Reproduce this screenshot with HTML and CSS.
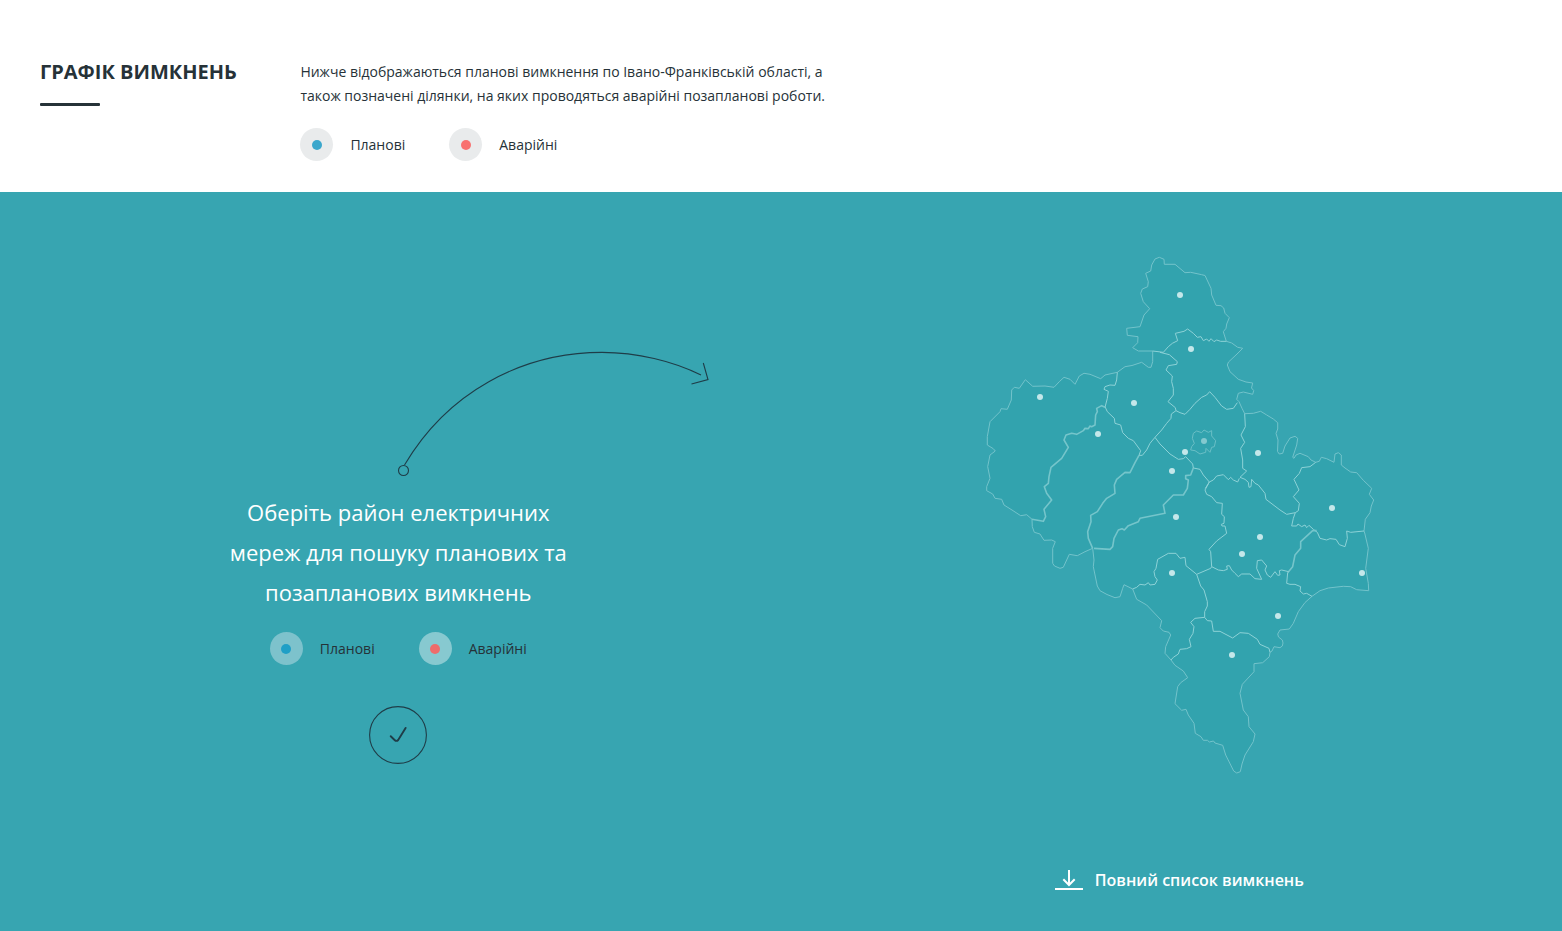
FILE: index.html
```html
<!DOCTYPE html>
<html lang="uk">
<head>
<meta charset="utf-8">
<title>Графік вимкнень</title>
<link rel="stylesheet" href="styles.css">
</head>
<body>
<header class="intro">
  <div class="intro-title"><h1>ГРАФІК ВИМКНЕНЬ</h1></div>
  <div class="intro-body">
    <p>Нижче відображаються планові вимкнення по Івано-Франківській області, а<br>також позначені ділянки, на яких проводяться аварійні позапланові роботи.</p>
    <ul class="legend">
      <li><i class="mark planned"></i><span>Планові</span></li>
      <li><i class="mark urgent"></i><span>Аварійні</span></li>
    </ul>
  </div>
</header>
<main class="board">
  <section class="guide">
    <svg class="arc" width="320" height="136" viewBox="392 346 320 136">
      <circle cx="403.5" cy="470.5" r="5"/>
      <path d="M404.5 465C447 393 521 352.4 602 352.4C637 352.4 673 361 701 375"/>
      <path d="M703.3 363L708 379.5L691.5 384"/>
    </svg>
    <p class="guide-text">Оберіть район електричних<br>мереж для пошуку планових та<br>позапланових вимкнень</p>
    <ul class="legend on-color">
      <li><i class="mark planned"></i><span>Планові</span></li>
      <li><i class="mark urgent"></i><span>Аварійні</span></li>
    </ul>
    <button class="confirm" aria-label="Підтвердити">
      <svg width="58" height="58" viewBox="0 0 58 58"><circle cx="29" cy="29" r="28.4"/><path d="M21.7 30.2L25.6 34Q27.5 35.8 29.2 34L36.6 21.9"/></svg>
    </button>
  </section>
  <section class="region">
    <svg class="map" width="400" height="530" viewBox="980 250 400 530">
      <path class="outline" d="M1155 259L1159.3 257.3 1164 259.3 1164.3 264.3 1175 264.3 1185 272.7 1190.7 272.3 1201.7 274.7 1205 275.5 1211 288.3 1211.7 295 1216 305.3 1221 305.7 1223.7 308 1225 313.3 1229.3 317.7 1226.7 324 1226 328.3 1223.3 331.7 1226.3 341.3 1231.7 343 1237.7 347.3 1242.7 348.3 1237 354 1228.5 362 1227.3 365 1230 371.7 1238.3 379.3 1246 382 1252.7 383 1251.5 388 1253.7 390.5 1252.7 394.3 1243.3 392 1238.3 393.3 1236.7 399.3 1239 401.7 1242 408.3 1244.7 413.7 1253.3 413.3 1260.7 411.3 1266.7 415 1273.3 419 1277.7 422.7 1277.7 429 1276 433.3 1278 440 1277.5 451.5 1279.3 454 1282.7 453.3 1285 446 1290 438 1295 436.3 1297.7 438.3 1296.7 445 1292.7 457.3 1294 458.3 1296 455 1300 453.3 1308.3 456.7 1311 460 1315.7 462.3 1319.3 461.3 1321.3 457.3 1326.7 458.7 1334 462.3 1335 454 1338.3 452.7 1341.3 455 1341.3 465 1345 468 1350.7 472 1356.7 472.7 1363.3 480.3 1371.7 488.3 1369.3 494.3 1373.7 500 1371.3 506 1370 512.7 1365.3 519.3 1364 531 1364.7 533 1368.3 548.3 1365.7 568.3 1368.3 583.3 1368.7 590.7 1356.7 589.7 1350.7 586.7 1343.3 586.3 1328.3 588 1320 590.7 1312 596.3 1305 602.5 1298.3 611.7 1293.3 623.3 1289.3 629 1280 630 1277.7 634 1278.5 637 1282.3 640 1283 643 1282.3 646 1280 647.7 1274 646.7 1272 651 1270 652.3 1269.3 656.7 1262.7 662.7 1254 663.7 1254 671.7 1242.3 684.3 1240 693.3 1243.3 710 1248.3 716.7 1249 726.7 1255 734 1253.3 741.7 1245 755 1242 764 1240.3 771.7 1236.7 773 1233.7 771 1225.7 755 1222.7 745.3 1215 743 1213.5 741 1209.3 742 1207.5 740.3 1203.3 740.3 1201 736.7 1195.3 733.3 1194 723.3 1188.3 715 1186 709.3 1181.7 710.3 1175 703.7 1177.7 686.7 1180.7 682.7 1187.7 677.7 1183.3 671 1175 665.3 1171 660 1165 653.3 1165.7 646.7 1170.7 635 1169 632.3 1163.3 631 1160 627.7 1161.7 620.7 1146.7 605 1136.7 599.3 1135 595 1132.7 589 1124 584.7 1122.7 588.3 1120 596.7 1115 597.7 1107 594.5 1100 590.7 1097.3 586 1093.3 566.7 1094 560 1092.7 548.3 1085 551.7 1077.3 555.7 1069.3 554.3 1063.3 567.3 1060 568.3 1054.5 566 1052.7 563.3 1052.7 548.3 1055.3 541.7 1051.7 540 1044 540.3 1040 534 1034.3 532.3 1032.3 526.7 1032 519.3 1026.7 514.7 1020.7 515.7 1012 510 1004 505 1001.7 499.3 995 498.3 992.7 494 986.7 490.7 986.7 486.7 990 478.3 987.7 466.7 990 455 995.3 451 993.3 448.7 987.3 445 987.3 436.7 990 421.7 1000 411.7 1001 408.7 1007.3 409.3 1011.3 400 1011.7 390 1014.3 387.3 1019.3 388.3 1025.3 379.7 1032.7 386.3 1045 386 1054 387.3 1059.3 381.7 1064 377.3 1070 379.3 1075 384.3 1079.3 376 1084 373.3 1090 374.3 1100.7 378.7 1105 375 1117.3 372.3 1125 366.7 1132 365.5 1141.7 362.3 1148.3 367.3 1151 367.3 1152.7 361.7 1152.7 351 1138.3 351 1132.7 347.7 1137.7 342.7 1138 336.7 1127.3 335.3 1126.7 328.3 1140 326.7 1144 315 1149.7 308.7 1143.3 301.7 1140.7 293.3 1142.3 289 1147.7 286.7 1148.3 281.7 1145.7 273.3 1150.7 271 1151.7 265Z"/>
      <g class="borders">
        <g transform="translate(1110 250) scale(.33333)">
          <path d="M128 303L160 307 175 290 187 280 203 272 196 250 222 244 233 237 250 250 262 262 273 260 280 272 290 267 297 274 303 266 312 275 320 270 332 274 349 274"/>
          <path d="M150 307L178 314 202 335 200 343 175 347 168 360 187 378 185 395 190 415 190 435 174 455 196 473 198 482"/>
        </g>
        <g transform="translate(980 350) scale(.33333)">
          <path d="M412 67L410 90 405 106 390 105 375 110 372 118 385 124 382 145 375 172"/>
          <path class="twin" d="M375 172L365 167 350 175 352 185 347 195 345 225 335 230 330 228 325 236 315 235 310 242 290 253 275 250 258 255 252 270 265 292 245 325 213 352 207 380 205 400 193 410 200 430 215 450 192 478 197 500 190 514 156 508"/>
        </g>
        <g transform="translate(1100 380) scale(.33333)">
          <path d="M228 92L214 102 213 115 200 130 185 150 165 172 150 190 140 210 127 226 117 226 122 212 100 182 85 175 68 158 62 135 45 130 43 115 22 95 15 80"/>
          <path d="M228 92L240 98 255 103 270 88 285 70 305 52 320 45 329 35 345 52 365 78 380 88 400 85 412 68"/>
          <path d="M418 295L413 306 400 300 392 292 385 299 370 284 350 288 340 300 328 306 316 325"/>
          <path d="M165 172L180 192 210 222 235 238 250 236 257 230 278 252 280 264 300 268 310 285 328 306"/>
          <path class="twin" d="M280 264L272 285 257 287 257 296 265 300 262 325 250 345 220 345 190 375 195 400 120 415 115 425 85 437 73 450 66 446 55 450 42 475 38 500 30 508 -18 505"/>
          <path class="twin" d="M117 226L105 248 90 278 75 277 50 298 43 315 45 340 20 355 8 370 -8 395 -28 406 -27 425 -37 455 -35 475 -22 505"/>
          <path class="city" d="M280 160L290 153 305 158 312 150 325 157 335 152 335 168 347 182 343 200 335 202 330 217 318 205 317 217 300 222 285 212 272 210 275 200 283 190 277 175Z"/>
        </g>
        <g transform="translate(1230 400) scale(.33333)">
          <path d="M44 41L46 80 33 105 44 127 32 145 38 180 38 205 50 213 30 232"/>
          <path d="M257 187L240 200 215 203 208 220 192 238 207 270 190 290 208 310 205 332 196 338 190 355 185 378 200 378 204 372 215 380 225 375 230 383 237 376 250 388 262 397 270 415 290 420 300 416 318 418 328 434 345 440 352 415 350 393 362 397 402 393"/>
          <path d="M30 232L45 238 55 247 57 262 63 260 65 238 75 250 85 255 105 280 108 298 150 330 170 343 196 338"/>
        </g>
        <g transform="translate(1240 500) scale(.33333)">
          <path class="twin" d="M230 92L218 92 182 125 182 145 165 165 158 200 143 218"/>
          <path d="M146 215L125 210 118 212 120 225 113 226 105 215 92 232 82 225 75 210 80 198 65 180 52 182 50 205 65 238 45 236 30 222 5 222"/>
          <path d="M143 218L140 250 150 253 165 253 182 260 180 273 190 282 200 280 216 289"/>
        </g>
        <g transform="translate(1140 480) scale(.33333)">
          <path d="M305 282L295 290 285 280 275 270 268 257 260 258 262 268 250 272 235 270 215 260"/>
          <path d="M208 6L195 30 200 43 215 50 230 68 247 70 245 103 253 110 252 130 244 133 246 138 255 138 260 160 230 183 207 208 212 215 215 260 212 265 170 283 138 257 135 232 120 235 108 220 85 220 53 238 48 265 42 275 45 290 52 300 45 313 30 315 25 308 15 315 0 313 -10 322 -22 327"/>
          <path d="M170 283L182 318 192 330 202 365 202 378 194 395 194 412"/>
        </g>
        <g transform="translate(1120 590) scale(.33333)">
          <path d="M254 82L262 92 275 93 280 124 300 124 338 144 360 128 385 130 412 148 420 163 447 175 450 187"/>
          <path d="M254 82L225 85 212 97 222 110 219 130 208 148 213 170 200 176 180 178 175 192 160 202 153 210"/>
        </g>
      </g>
      <g class="points">
        <circle cx="1180" cy="295" r="3"/><circle cx="1191" cy="349" r="3"/><circle cx="1040" cy="397" r="3"/>
        <circle cx="1134" cy="403" r="3"/><circle cx="1098" cy="434" r="3"/><circle class="dim" cx="1204" cy="441" r="3"/>
        <circle cx="1185" cy="452" r="3"/><circle cx="1258" cy="453" r="3"/><circle cx="1172" cy="471" r="3"/>
        <circle cx="1332" cy="508" r="3"/><circle cx="1176" cy="517" r="3"/><circle cx="1260" cy="537" r="3"/>
        <circle cx="1242" cy="554" r="3"/><circle cx="1172" cy="573" r="3"/><circle cx="1362" cy="573" r="3"/>
        <circle cx="1278" cy="616" r="3"/><circle cx="1232" cy="655" r="3"/>
      </g>
    </svg>
    <a class="download" href="#">
      <svg width="28" height="20" viewBox="0 0 28 20"><path d="M14 0V14.5M8.3 9.2L14 15L19.7 9.2M0 19H28"/></svg>
      <span>Повний список вимкнень</span>
    </a>
  </section>
</main>
</body>
</html>
```

FILE: styles.css
```css
* { box-sizing: border-box; }
body { margin: 0; height: 931px; display: flex; flex-direction: column; overflow: hidden; background: #fff; color: #263238; font-family: "Open Sans", "Noto Sans", sans-serif; font-size: 14px; line-height: 24px; }
h1, p, ul { margin: 0; padding: 0; }
svg { display: block; }
.intro { display: flex; height: 192px; padding: 60px 40px 0; }
.intro-title { width: 260.4px; flex: none; }
.intro-title h1 { font-size: 20px; line-height: 24px; font-weight: 700; white-space: nowrap; }
.intro-title::after { content: ""; display: block; width: 60px; height: 3px; margin-top: 19px; border-radius: 1px; background: #263238; }
.intro-body p { white-space: nowrap; }
.legend { display: flex; gap: 44px; list-style: none; }
.intro .legend { margin-top: 20.4px; }
.legend li { display: flex; align-items: center; gap: 17px; height: 33px; }
.mark { display: grid; place-items: center; width: 33px; height: 33px; border-radius: 50%; background: #e9ebec; }
.mark::after { content: ""; width: 10px; height: 10px; border-radius: 50%; background: #3ba7cc; }
.urgent::after { background: #f8716f; }
.on-color .mark { background: #87c9d0; }
.on-color .planned { background: #7dc2cc; }
.on-color .planned::after { background: #1f9fc6; }
.on-color .urgent::after { background: #ee6c6b; }
.board { flex: 1; display: grid; grid-template-columns: 796.6px 1fr; background: #37a5b1; }
.guide { display: flex; flex-direction: column; align-items: center; padding-top: 154px; }
.arc { margin-left: 307.4px; fill: none; stroke: #1f3d48; stroke-width: 1.1; }
.guide-text { margin-top: 10px; color: #fff; font-size: 22px; line-height: 40px; text-align: center; white-space: nowrap; }
.guide .legend { margin-top: 20.3px; }
.confirm { margin: 40.7px 0.6px 0 0; padding: 0; border: 0; background: none; }
.confirm svg { fill: none; stroke: #1f3d48; stroke-width: 1.1; }
.confirm path { stroke-width: 1.9; stroke-linecap: round; }
.region { display: flex; flex-direction: column; align-items: center; padding-top: 58px; }
.map { margin-left: 1.4px; }
.outline { fill: #32a3ae; stroke: #73c3cb; stroke-width: 1; stroke-linejoin: round; }
.borders path { fill: none; stroke: #8dd2d7; stroke-width: 1; stroke-linejoin: round; vector-effect: non-scaling-stroke; }
.borders .twin { stroke: #75c5cb; stroke-width: 1.6; }
.borders .city { stroke: #6abfc6; }
.points { fill: #c4e7ea; }
.points .dim { fill: #83c9cf; }
.download { display: flex; align-items: center; gap: 12px; margin-top: 88px; color: #fff; font-size: 16px; font-weight: 600; text-decoration: none; white-space: nowrap; }
.download svg { fill: none; stroke: #fff; stroke-width: 2; }
```
